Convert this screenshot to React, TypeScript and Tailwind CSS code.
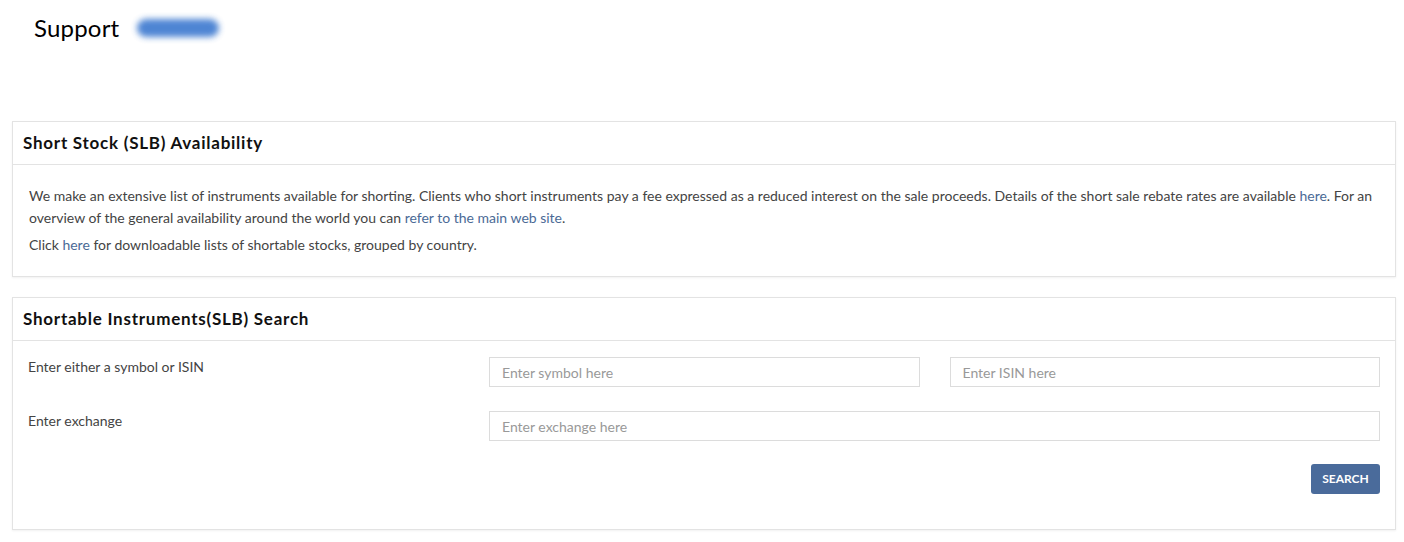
import React from "react";

export default function App() {
  const font = { fontFamily: "Lato, 'Open Sans', Arial, sans-serif" };
  return (
    <div className="w-[1404px] h-[542px] bg-white text-[#333]" style={font}>
      <div className="flex items-center h-[56px] pl-[34px]">
        <h1 className="text-[24px] text-black leading-none font-normal tracking-[0.2px]">Support</h1>
        <div className="ml-[18px] w-[82px] h-[18px] rounded-full bg-[#3b78cf] blur-[3px] opacity-90" />
      </div>
      <div className="pl-[12px] pr-[8px] pt-[65px]">
        <div className="border border-[#e3e3e3] shadow-[0_1px_2px_rgba(0,0,0,0.06)]">
          <div className="h-[43px] flex items-center px-[10px] border-b border-[#e3e3e3]">
            <h2 className="text-[17px] font-bold text-[#111] tracking-[0.75px]">Short Stock (SLB) Availability</h2>
          </div>
          <div className="px-[16px] pt-[20px] pb-[20px] text-[14px] leading-[22px] text-[#444]">
            <p className="mb-[5px]">
              We make an extensive list of instruments available for shorting. Clients who short instruments pay a fee expressed as a reduced interest on the sale proceeds. Details of the short sale rebate rates are available <a className="text-[#4b6a96]">here</a>. For an overview of the general availability around the world you can <a className="text-[#4b6a96]">refer to the main web site</a>.
            </p>
            <p>
              Click <a className="text-[#4b6a96]">here</a> for downloadable lists of shortable stocks, grouped by country.
            </p>
          </div>
        </div>
        <div className="mt-[20px] border border-[#e3e3e3] shadow-[0_1px_2px_rgba(0,0,0,0.06)]">
          <div className="h-[43px] flex items-center px-[10px] border-b border-[#e3e3e3]">
            <h2 className="text-[17px] font-bold text-[#111] tracking-[0.75px]">Shortable Instruments(SLB) Search</h2>
          </div>
          <div className="px-[15px] pt-[16px] pb-[35px] text-[14px] text-[#444]">
            <div className="flex items-start">
              <div className="w-[461px] pt-[1px] leading-[18px]">Enter either a symbol or ISIN</div>
              <div className="flex-1 flex gap-[30px]">
                <input className="flex-1 min-w-0 h-[30px] border border-[#dcdcdc] px-[12px] text-[14px] placeholder:text-[#999] outline-none" placeholder="Enter symbol here" />
                <input className="flex-1 min-w-0 h-[30px] border border-[#dcdcdc] px-[12px] text-[14px] placeholder:text-[#999] outline-none" placeholder="Enter ISIN here" />
              </div>
            </div>
            <div className="flex items-start mt-[24px]">
              <div className="w-[461px] pt-[1px] leading-[18px]">Enter exchange</div>
              <input className="flex-1 min-w-0 h-[30px] border border-[#dcdcdc] px-[12px] text-[14px] placeholder:text-[#999] outline-none" placeholder="Enter exchange here" />
            </div>
            <div className="flex justify-end mt-[23px]">
              <button className="w-[69px] h-[30px] rounded-[3px] bg-[#4a6b9b] text-white text-[12px] font-bold">SEARCH</button>
            </div>
          </div>
        </div>
      </div>
    </div>
  );
}
